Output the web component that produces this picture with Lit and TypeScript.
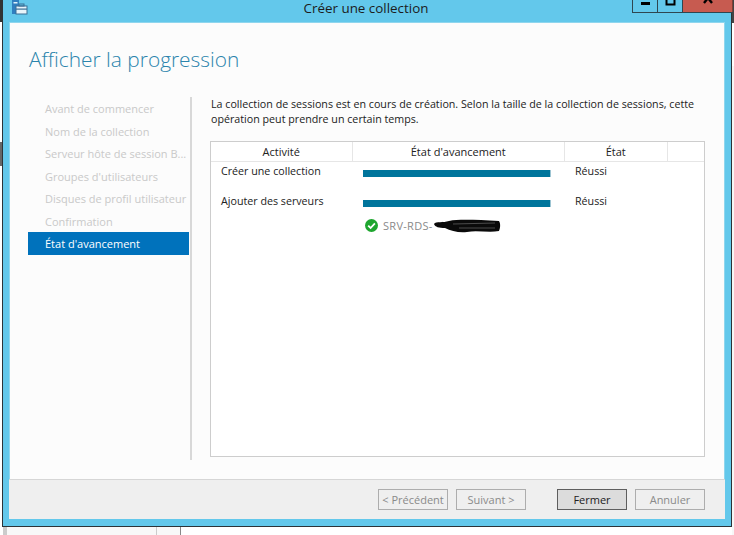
import { LitElement, html, css } from "lit";
import { customElement } from "lit/decorators.js";

const steps = ["Avant de commencer", "Nom de la collection", "Serveur hôte de session B...", "Groupes d'utilisateurs", "Disques de profil utilisateur", "Confirmation"];

@customElement("app-root")
export class AppRoot extends LitElement {
  static styles = css`
    :host { display: block; width: 734px; height: 535px; position: relative; overflow: hidden; background: #fff;
      font-family: "Open Sans", "Noto Sans", sans-serif; font-size: 11px; color: #222; }
    .bg-tl { position: absolute; left: 0; top: 0; width: 2px; height: 22px; background: #333; }
    .bg-ml { position: absolute; left: 0; top: 142px; width: 2px; height: 24px; background: #666; }
    .bg-tr { position: absolute; left: 732px; top: 0; width: 2px; height: 23px; background: #444; }
    .bg-r { position: absolute; left: 732px; top: 66px; width: 2px; height: 469px; background: #f7f7f7; }
    .bg-b { position: absolute; left: 3px; top: 527px; width: 178px; height: 8px; background: #f8f8f8; border-right: 1px solid #888; box-sizing: border-box; }
    .bg-b::before { content: ""; position: absolute; left: 153px; top: 0; width: 1px; height: 8px; background: #ccc; }
    .bg-b::after { content: ""; position: absolute; left: 0; top: 0; width: 4px; height: 8px; background: #ccc; }
    .win { position: absolute; left: 2px; top: -10px; width: 730px; height: 537px; box-sizing: border-box; border: 1px solid #2c3338; border-top: 0; background: #63c8eb; display: flex; flex-direction: column; padding: 0 6px 7px 6px; }
    .title { height: 32px; flex: none; display: flex; justify-content: center; align-items: flex-end; position: relative; font-size: 13.4px; line-height: 20px; color: #1c1c1c; box-sizing: border-box; padding-bottom: 4px; }
    .title span { transform: translateX(-1px); }
    .appicon { position: absolute; left: 3px; top: 10px; }
    .ctrls { position: absolute; left: 623px; top: 0; height: 23px; display: flex; border: 1px solid #2f4650; border-top: 0; border-right: 0; box-sizing: border-box; width: 101px; }
    .ctrl { height: 100%; display: flex; align-items: center; justify-content: center; box-sizing: border-box; border-right: 1px solid #2f4650; }
    .c1 { width: 25px; } .c2 { width: 25px; } .c3 { flex: 1; background: #c75b50; border-right: 1px solid #7f3e37; }
    .client { flex: 1; display: flex; flex-direction: column; background: #fcfcfc; min-height: 0; box-shadow: 0 0 0 1px #8fd6ee inset; }
    .head { height: 75px; flex: none; box-sizing: border-box; padding: 20px 0 0 20px; font-size: 20.9px; line-height: 34px; color: #2b84ac; font-weight: 300; }
    .body { flex: 1; min-height: 0; display: flex; }
    .side { width: 161px; margin-left: 19px; box-sizing: border-box; display: flex; flex-direction: column; height: 363px; }
    .step { height: 22.5px; line-height: 24px; padding-left: 17px; color: #c9c9c9; white-space: nowrap; font-size: 11px; flex: none; }
    .step.on { background: #0072bc; color: #fff; height: 23px; }
    .rule { width: 2px; height: 363px; background: #d8d8d8; margin-left: 1px; flex: none; }
    .main { margin-left: 18px; width: 495px; display: flex; flex-direction: column; }
    .intro { margin: 0 0 0 1px; height: 44px; line-height: 15px; color: #222; font-size: 10.7px; white-space: nowrap; }
    .list { width: 495px; height: 316px; box-sizing: border-box; border: 1px solid #cdcdcd; background: #fff; display: flex; flex-direction: column; }
    .hdr { height: 20px; flex: none; display: grid; grid-template-columns: 140.5px 210.5px 101.5px 1fr; gap: 1.5px; background: #e6e6e6; border-bottom: 1px solid #e6e6e6; box-sizing: border-box; }
    .hdr div { background: #fff; text-align: center; line-height: 19px; }
    .row { display: grid; grid-template-columns: 151px 188px 1fr; height: 30px; flex: none; }
    .name { padding-left: 10px; line-height: 18px; font-size: 10.7px; }
    .row .res { padding-left: 25px; line-height: 18px; font-size: 10.7px; }
    .barwrap { padding: 8px 0 0 1px; }
    .bar { height: 7px; width: 188px; background: #00759c; border-right: 1px solid #9dc4d2; box-sizing: border-box; }
    .sub { display: flex; align-items: center; margin: -7px 0 0 154px; height: 20px; color: #8a8a8a; gap: 5px; letter-spacing: 0.3px; }
    .foot { height: 40px; flex: none; background: #efefef; border-top: 1px solid #d6d6d6; box-sizing: border-box; display: flex; align-items: center; padding: 0 19px 0 369px; }
    .btn { width: 70px; height: 21px; box-sizing: border-box; border: 1px solid #adadad; background: #efefef; color: #8a8a8a; text-align: center; line-height: 19px; font-size: 11px; white-space: nowrap; }
    .btn.def { background: #dcdcdc; border-color: #5e5e5e; color: #222; }
    .g1 { margin-left: 8px; } .g2 { margin-left: 31px; }
    .mask { margin-left: -5px; }
  `;
  render() {
    return html`
      <div class="bg-tl"></div><div class="bg-ml"></div><div class="bg-tr"></div><div class="bg-r"></div><div class="bg-b"></div>
      <div class="win">
        <div class="title">
          <svg class="appicon" width="16" height="15" viewBox="0 0 16 15">
            <rect x="0" y="0" width="7" height="14" fill="#2f7fc0"/>
            <rect x="1.5" y="2" width="4" height="1.5" fill="#dff2fb"/>
            <rect x="4" y="6" width="11" height="8" fill="#e8f4fa" stroke="#3a6f95"/>
            <rect x="7" y="4" width="5" height="2" fill="none" stroke="#3a6f95"/>
            <rect x="4" y="8.5" width="11" height="1.2" fill="#3a6f95"/>
          </svg>
          <span>Créer une collection</span>
          <div class="ctrls">
            <div class="ctrl c1"><svg width="11" height="12" viewBox="0 0 11 12"><rect x="1" y="7" width="9" height="3" fill="#000"/></svg></div>
            <div class="ctrl c2"><svg width="11" height="12" viewBox="0 0 11 12"><rect x="1.5" y="1.5" width="8" height="8" fill="none" stroke="#000" stroke-width="2"/></svg></div>
            <div class="ctrl c3"><svg width="12" height="12" viewBox="0 0 12 12"><path d="M2 -2L10 8M10 -2L2 8" stroke="#000" stroke-width="2.4"/></svg></div>
          </div>
        </div>
        <div class="client">
          <div class="head">Afficher la progression</div>
          <div class="body">
            <div class="side">
              ${steps.map((s) => html`<div class="step">${s}</div>`)}
              <div class="step on">État d'avancement</div>
            </div>
            <div class="rule"></div>
            <div class="main">
              <p class="intro">La collection de sessions est en cours de création. Selon la taille de la collection de sessions, cette<br>opération peut prendre un certain temps.</p>
              <div class="list">
                <div class="hdr"><div>Activité</div><div>État d'avancement</div><div>État</div><div></div></div>
                <div class="row"><div class="name">Créer une collection</div><div class="barwrap"><div class="bar"></div></div><div class="res">Réussi</div></div>
                <div class="row"><div class="name">Ajouter des serveurs</div><div class="barwrap"><div class="bar"></div></div><div class="res">Réussi</div></div>
                <div class="sub">
                  <svg width="13" height="13" viewBox="0 0 13 13"><circle cx="6.5" cy="6.5" r="6.5" fill="#1ea62f"/><path d="M3.2 6.6L5.6 9L9.9 4.3" fill="none" stroke="#fff" stroke-width="1.8"/></svg>
                  <span>SRV-RDS-</span>
                  <svg class="mask" width="68" height="15" viewBox="0 0 68 15"><path d="M1 6C3 3 10 5 16 3C26 1 44 2 66 3C68 6 67 11 66 13C56 15 44 12 34 14C26 15 18 13 12 10C6 10 2 9 1 6Z" fill="#0a0a0a"/><path d="M20 6L62 5M26 10L62 10" stroke="#777" stroke-width=".6"/></svg>
                </div>
              </div>
            </div>
          </div>
          <div class="foot">
            <div class="btn">&lt; Précédent</div>
            <div class="btn g1">Suivant &gt;</div>
            <div class="btn def g2">Fermer</div>
            <div class="btn g1">Annuler</div>
          </div>
        </div>
      </div>
    `;
  }
}
